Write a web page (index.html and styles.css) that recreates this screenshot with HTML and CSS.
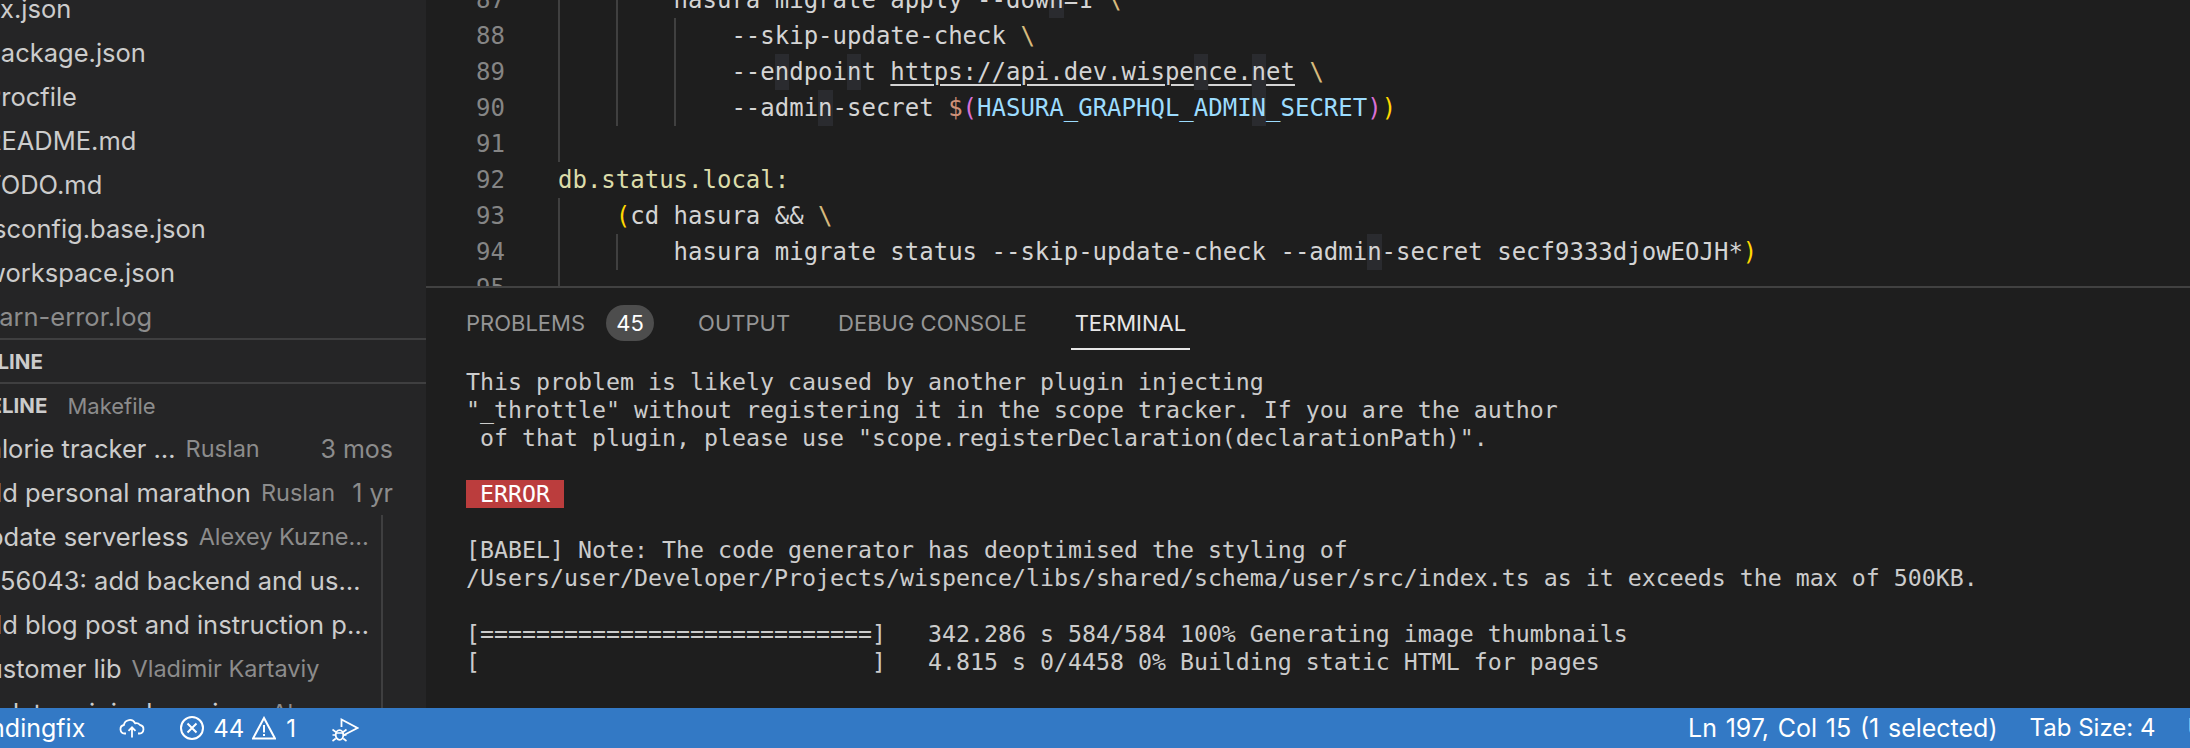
FILE: index.html
```html
<!DOCTYPE html>
<html lang="en">
<head>
<meta charset="utf-8">
<title>Makefile - wispence</title>
<link rel="stylesheet" href="styles.css">
</head>
<body>
<div class="app">
  <div class="main">
    <aside class="sidebar">
      <ul class="files">
        <li class="file">nx.json</li>
        <li class="file">package.json</li>
        <li class="file">Procfile</li>
        <li class="file">README.md</li>
        <li class="file">TODO.md</li>
        <li class="file">tsconfig.base.json</li>
        <li class="file">workspace.json</li>
        <li class="file ignored">yarn-error.log</li>
      </ul>
      <div class="section-head outline-head"><b>OUTLINE</b></div>
      <div class="section-head timeline-head"><b>TIMELINE</b><span class="head-file">Makefile</span></div>
      <div class="commits">
        <div class="commit"><span class="msg">Calorie tracker …</span><span class="author">Ruslan</span><span class="age">3 mos</span></div>
        <div class="commit"><span class="msg">Add personal marathon</span><span class="author">Ruslan</span><span class="age">1 yr</span></div>
        <div class="commit-group">
          <div class="commit"><span class="msg">Update serverless</span><span class="author">Alexey Kuzne…</span></div>
          <div class="commit"><span class="msg">N-56043: add backend and us…</span></div>
          <div class="commit"><span class="msg">Add blog post and instruction p…</span></div>
          <div class="commit"><span class="msg">Customer lib</span><span class="author">Vladimir Kartaviy</span></div>
          <div class="commit"><span class="msg">Update original services</span><span class="author">Alexey</span></div>
        </div>
      </div>
    </aside>
    <div class="workbench">
      <div class="editor">
        <div class="line"><span class="ln">87</span><span class="code"><i class="g"></i><i class="g"></i>hasura migrate apply --dow<b class="hl">n</b>=1 <span class="esc">\</span></span></div>
        <div class="line"><span class="ln">88</span><span class="code"><i class="g"></i><i class="g"></i><i class="g"></i>--skip-update-check <span class="esc">\</span></span></div>
        <div class="line"><span class="ln">89</span><span class="code"><i class="g"></i><i class="g"></i><i class="g"></i>--e<b class="hl">n</b>dpoi<b class="hl">n</b>t <span class="url">https://api.dev.wispe<b class="hl">n</b>ce.<b class="hl">n</b>et</span> <span class="esc">\</span></span></div>
        <div class="line"><span class="ln">90</span><span class="code"><i class="g"></i><i class="g"></i><i class="g"></i>--admi<b class="hl">n</b>-secret <span class="dollar">$</span><span class="p2">(</span><span class="var">HASURA_GRAPHQL_ADMI<b class="hl">N</b>_SECRET</span><span class="p2">)</span><span class="p1">)</span></span></div>
        <div class="line"><span class="ln">91</span><span class="code"><i class="g"></i></span></div>
        <div class="line"><span class="ln">92</span><span class="code"><span class="target">db.status.local:</span></span></div>
        <div class="line"><span class="ln">93</span><span class="code"><i class="g"></i><span class="p1">(</span>cd hasura &amp;&amp; <span class="esc">\</span></span></div>
        <div class="line"><span class="ln">94</span><span class="code"><i class="g"></i><i class="g"></i>hasura migrate status --skip-update-check --admi<b class="hl">n</b>-secret secf9333djowEOJH*<span class="p1">)</span></span></div>
        <div class="line"><span class="ln">95</span><span class="code"><i class="g"></i></span></div>
      </div>
      <section class="panel">
        <nav class="tabs">
          <span class="tab tab-problems">PROBLEMS</span>
          <span class="badge">45</span>
          <span class="tab tab-output">OUTPUT</span>
          <span class="tab tab-debug">DEBUG CONSOLE</span>
          <span class="tab tab-active">TERMINAL</span>
        </nav>
<pre class="terminal">This problem is likely caused by another plugin injecting
"_throttle" without registering it in the scope tracker. If you are the author
 of that plugin, please use "scope.registerDeclaration(declarationPath)".

<span class="err"> ERROR </span>

[BABEL] Note: The code generator has deoptimised the styling of
/Users/user/Developer/Projects/wispence/libs/shared/schema/user/src/index.ts as it exceeds the max of 500KB.

[============================]   342.286 s 584/584 100% Generating image thumbnails
[                            ]   4.815 s 0/4458 0% Building static HTML for pages</pre>
      </section>
    </div>
  </div>
  <footer class="status">
    <div class="status-left">
      <span class="branch">landingfix</span>
      <svg class="ico ico-cloud" viewBox="0 0 26 20" width="26" height="20"><path d="M7 15.500H5.500a4.300 4.300 0 0 1-.6-8.500 6 6 0 0 1 11.300-1.700 5 5 0 0 1 4.800 1.700 4.300 4.300 0 0 1-.5 8.500H19M13 19.500V9.500M9.500 12.800 13 9.300l3.500 3.500" fill="none" stroke="#fff" stroke-width="1.800"/></svg>
      <svg class="ico ico-err" viewBox="0 0 24 24" width="24" height="24"><circle cx="12" cy="12" r="11" fill="none" stroke="#fff" stroke-width="2"/><path d="M7.500 7.500l9 9M16.500 7.500l-9 9" stroke="#fff" stroke-width="2"/></svg>
      <span class="count">44</span>
      <svg class="ico ico-warn" viewBox="0 0 24 24" width="24" height="24"><path d="M12 2 23 22.500H1Z" fill="none" stroke="#fff" stroke-width="2"/><path d="M12 9v7.500M12 18v2" stroke="#fff" stroke-width="2"/></svg>
      <span class="count count-warn">1</span>
      <svg class="ico ico-debug" viewBox="0 0 27 24" width="27" height="24"><path d="M9.500 9V1.500L25.500 10 11 17.500" fill="none" stroke="#fff" stroke-width="1.800"/><ellipse cx="7.500" cy="17" rx="3.800" ry="4.800" fill="none" stroke="#fff" stroke-width="1.800"/><path d="M3.800 15h7.500M0.500 11.500l3.300 2.500M14.500 11.500l-3.300 2.500M0.500 17h3M11.500 17h3M0.500 23l3.300-2.500M14.500 23l-3.300-2.500" fill="none" stroke="#fff" stroke-width="1.600"/></svg>
    </div>
    <div class="status-right">
      <span class="pos">Ln 197, Col 15 (1 selected)</span>
      <span>Tab Size: 4</span>
      <span>UTF-8</span>
    </div>
  </footer>
</div>
</body>
</html>
```
FILE: styles.css
```css
* { box-sizing: border-box; }
html, body { margin: 0; padding: 0; height: 100%; overflow: hidden; background: #1e1e1e; }
.app { width: 2190px; height: 748px; display: flex; flex-direction: column; overflow: hidden; font-family: Inter, "Liberation Sans", sans-serif; }
.main { flex: none; height: 708px; display: flex; overflow: hidden; }

/* sidebar */
.sidebar { flex: none; width: 426px; height: 708px; background: #252526; overflow: hidden; color: #cccccc; font-size: 25.500px; white-space: nowrap; }
.files { list-style: none; margin: -13px 0 -1px -15px; padding: 0; }
.file { height: 44px; line-height: 44px; }
.ignored { color: #8c8c8c; }
.section-head { display: flex; align-items: center; font-size: 20.500px; }
.section-head b { font-weight: 700; color: #cccccc; }
.outline-head { margin-left: -47px; height: 44px; padding-top: 1px; border-top: 2px solid #3f3f40; }
.timeline-head { margin-left: -49px; height: 45px; border-top: 2px solid #3f3f40; }
.head-file { margin-left: 20px; color: #8c8c8c; font-size: 22px; }
.commits { margin-left: -31px; }
.commit { height: 44px; line-height: 44px; display: flex; }
.commit .msg { flex: none; }
.author { margin-left: 10px; color: #8c8c8c; font-size: 23.500px; }
.age { margin-left: auto; color: #8c8c8c; font-size: 25px; }
.commits > .commit { width: 424px; }
.commit-group { width: 414px; border-right: 2px solid #3f3f40; }

/* editor */
.workbench { flex: 1; min-width: 0; display: flex; flex-direction: column; background: #1e1e1e; }
.editor { flex: none; height: 286px; overflow: hidden; font-family: "DejaVu Sans Mono", monospace; font-size: 24px; color: #d4d4d4; }
.line { height: 36px; line-height: 36px; display: flex; white-space: pre; }
.line:first-child { margin-top: -18px; }
.ln { flex: none; width: 79px; margin-right: 53px; text-align: right; color: #858585; }
.code { flex: none; }
.g { display: inline-block; width: 4ch; height: 36px; vertical-align: top; box-shadow: inset 2px 0 0 #404040; font-style: normal; }
.hl { display: inline-block; height: 36px; vertical-align: top; background: #2a2b2f; font-weight: 400; }
.esc { color: #d7ba7d; }
.url { text-decoration: underline; text-decoration-thickness: 2px; text-underline-offset: 4px; }
.dollar { color: #ce9178; }
.var { color: #9cdcfe; }
.p1 { color: #ffd700; }
.p2 { color: #da70d6; }
.target { color: #dcdcaa; }

/* panel */
.panel { flex: 1; min-height: 0; border-top: 2px solid #414141; overflow: hidden; }
.tabs { display: flex; align-items: center; height: 62px; padding-left: 40px; font-size: 22px; color: #969696; }
.tab { flex: none; height: 62px; line-height: 70px; }
.badge { flex: none; width: 48px; height: 36px; margin: 8px 0 0 21px; border-radius: 18px; background: #4d4d4d; color: #ffffff; text-align: center; line-height: 36px; }
.tab-output { margin-left: 44px; }
.tab-debug { margin-left: 48px; }
.tab-active { margin-left: 44px; padding: 0 4px; color: #e7e7e7; border-bottom: 2px solid #e7e7e7; }
.terminal { margin: 18px 0 0 40px; font-family: "DejaVu Sans Mono", monospace; font-size: 23.250px; line-height: 28px; color: #cccccc; }
.err { display: inline-block; height: 28px; background: #bb3d3d; color: #ffffff; vertical-align: top; }

/* status */
.status { flex: none; height: 40px; display: flex; align-items: center; background: #3379c5; color: #ffffff; font-size: 24px; white-space: nowrap; overflow: hidden; }
.status-left { flex: none; width: 1688px; display: flex; align-items: center; }
.branch { margin-left: -30px; font-size: 25px; }
.ico { flex: none; display: block; }
.ico-cloud { margin-left: 34px; }
.ico-err { margin-left: 35px; }
.count { margin-left: 9px; }
.ico-warn { margin-left: 8px; }
.count-warn { margin-left: 10px; }
.ico-debug { margin-left: 36px; margin-top: 4px; }
.status-right { flex: none; display: flex; gap: 32px; }
.pos { font-size: 25px; word-spacing: 1.700px; }
```
